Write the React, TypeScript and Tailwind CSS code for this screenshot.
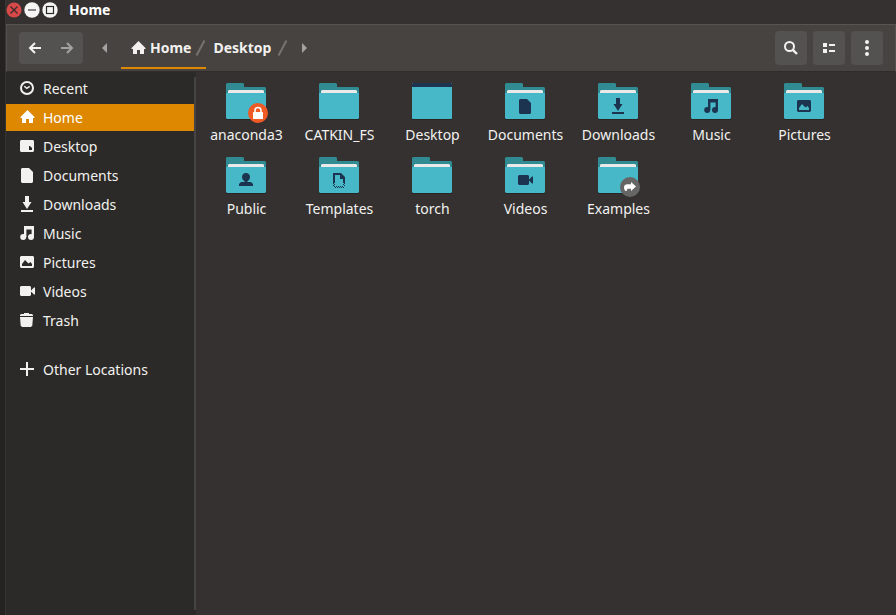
import React from "react";

type GlyphName =
  | "recent"
  | "home"
  | "desktop"
  | "documents"
  | "downloads"
  | "music"
  | "pictures"
  | "videos"
  | "trash"
  | "plus"
  | "public"
  | "templates";

const glyphs: Record<GlyphName, React.ReactNode> = {
  recent: (
    <g fill="none" stroke="currentColor">
      <circle cx="8" cy="8" r="6" strokeWidth="2" />
      <path d="M5.3 6.2 L7.8 8.4 L10.7 6.4" strokeWidth="1.4" />
    </g>
  ),
  home: <path d="M8.5 1 L15.5 8 V9 H14 V14 H10 V10 H7 V14 H3 V9 H1.5 V8 Z" />,
  desktop: <path fillRule="evenodd" d="M2 2 H14 L15 3 V13 L14 14 H2 L1 13 V3 Z M10 8 V12 H13 V10 L11 8 Z" />,
  documents: <path d="M3 1 H10 L14 5 V15 L13 16 H3 L2 15 V2 Z" />,
  downloads: (
    <g>
      <path d="M6 0 H10 V6 H12.5 L8 13 L3.5 6 H6 Z" />
      <path d="M2 14 H14 V16 H2 Z" />
    </g>
  ),
  music: (
    <g>
      <path d="M5 1 H15 V12 H12.6 V4.6 H7.4 V12 H5 Z" />
      <circle cx="4.2" cy="12" r="3" />
      <circle cx="12" cy="12" r="3" />
    </g>
  ),
  pictures: (
    <path
      fillRule="evenodd"
      d="M2 2 H14 L15 3 V13 L14 14 H2 L1 13 V3 Z M3 12 H13 V10 L11.5 8 L9.5 9.5 L6 6 L3 10 Z"
    />
  ),
  videos: (
    <g>
      <path d="M2 3 H11 L12 4 V12 L11 13 H2 L1 12 V4 Z" />
      <path d="M12 7.5 L15 4.5 H16 V11.5 H15 L12 8.5 Z" />
    </g>
  ),
  trash: (
    <g>
      <path d="M5 1 H10 V2 H13 L14 3 V4 H1 V3 L2 2 H5 Z" />
      <path d="M1 5 H14 L13.3 13.5 L12 15 H3 L1.7 13.5 Z" />
    </g>
  ),
  plus: <path d="M7 1 H9 V7 H15 V9 H9 V15 H7 V9 H1 V7 H7 Z" />,
  public: (
    <g>
      <path d="M8 1 C10.6 1 12 2.8 12 5 C12 7.2 10.4 9.5 8 9.5 C5.6 9.5 4 7.2 4 5 C4 2.8 5.4 1 8 1 Z" />
      <path d="M6.6 8 H9.4 V10 H13 L15 12 V14 H1 V12 L3 10 H6.6 Z" />
    </g>
  ),
  templates: (
    <g>
      <path fillRule="evenodd" d="M2 1 H10 L14 5 V11 H12 V7 H9 V3 H4 V11 H2 Z" />
      <path
        d="M2 11 H3 V12 H2 Z M3 12 H4 V13 H3 Z M2 13 H3 V14 H2 Z M3 14 H4 V15 H3 Z M5 14 H6 V15 H5 Z M7 14 H8 V15 H7 Z M9 14 H10 V15 H9 Z M11 14 H12 V15 H11 Z M4 15 H5 V16 H4 Z M6 15 H7 V16 H6 Z M8 15 H9 V16 H8 Z M10 15 H11 V16 H10 Z M12 15 H13 V16 H12 Z M13 11 H14 V12 H13 Z M12 12 H13 V13 H12 Z M13 13 H14 V14 H13 Z"
        shapeRendering="crispEdges"
      />
    </g>
  ),
};

type Place = { label: string; icon: GlyphName };

const places: Place[] = [
  { label: "Recent", icon: "recent" },
  { label: "Home", icon: "home" },
  { label: "Desktop", icon: "desktop" },
  { label: "Documents", icon: "documents" },
  { label: "Downloads", icon: "downloads" },
  { label: "Music", icon: "music" },
  { label: "Pictures", icon: "pictures" },
  { label: "Videos", icon: "videos" },
  { label: "Trash", icon: "trash" },
];

type Folder = { label: string; emblem?: GlyphName; badge?: "lock" | "link"; desktop?: boolean };

const folders: Folder[] = [
  { label: "anaconda3", badge: "lock" },
  { label: "CATKIN_FS" },
  { label: "Desktop", desktop: true },
  { label: "Documents", emblem: "documents" },
  { label: "Downloads", emblem: "downloads" },
  { label: "Music", emblem: "music" },
  { label: "Pictures", emblem: "pictures" },
  { label: "Public", emblem: "public" },
  { label: "Templates", emblem: "templates" },
  { label: "torch" },
  { label: "Videos", emblem: "videos" },
  { label: "Examples", badge: "link" },
];

function FolderIcon({ emblem, badge, desktop }: Folder) {
  return (
    <svg width="47" height="42" viewBox="0 0 47 42" aria-hidden="true">
      {desktop ? (
        <g>
          <rect x="3" y="1" width="40" height="36" rx="1" fill="#282524" />
          <rect x="3" y="0" width="40" height="36" rx="1" fill="#47b8c7" />
          <path d="M4 0 H42 L43 1 V4 H3 V1 Z" fill="#1c3450" />
        </g>
      ) : (
        <g>
          <rect x="3" y="5" width="40" height="32" rx="1" fill="#282524" />
          <path d="M4 0 H20 L21 1 V4 H42 L43 5 V20 H3 V1 Z" fill="#308b92" />
          <path d="M6 7 H40 L41 8 V12 H5 V8 Z" fill="#e9e9e9" />
          <path d="M3 10 H43 V35 L42 36 H4 L3 35 Z" fill="#47b8c7" />
        </g>
      )}
      {emblem && (
        <g transform="translate(15 15)" fill="currentColor" className="text-[#1c3450]">
          {glyphs[emblem]}
        </g>
      )}
      {badge === "lock" && (
        <g>
          <circle cx="35" cy="30" r="10" fill="#f05a24" />
          <rect x="30" y="29" width="10" height="7" rx="0.5" fill="#fff" />
          <path d="M32 29 V27.5 A3 3 0 0 1 38 27.5 V29" fill="none" stroke="#fff" strokeWidth="1.6" />
        </g>
      )}
      {badge === "link" && (
        <g>
          <circle cx="35" cy="30" r="10" fill="#666" />
          <path
            d="M36 25 L41 29.5 L36 34 V31.8 H32.5 L31.5 34 H30.5 C29.4 32.8 29 31.5 29 30.4 C29 28.2 30.4 27.2 32.5 27.2 H36 Z"
            fill="#fff"
          />
        </g>
      )}
    </svg>
  );
}

function PlaceLink({ label, icon, active }: Place & { active?: boolean }) {
  return (
    <a
      href={"#" + label.toLowerCase().replace(" ", "-")}
      aria-current={active ? "page" : undefined}
      className={
        "flex h-[27px] items-center gap-2 pl-[13px] " + (active ? "bg-[#dd8800] text-white" : "text-[#f2f1ef]")
      }
    >
      <svg width="16" height="17" viewBox="0 0 16 17" fill="currentColor" aria-hidden="true">
        {glyphs[icon]}
      </svg>
      {label}
    </a>
  );
}

function Slash() {
  return (
    <svg width="11" height="16" viewBox="0 0 11 16" aria-hidden="true">
      <path d="M1.5 15.5 L9.5 0.5" stroke="#77736f" strokeWidth="2" />
    </svg>
  );
}

function ToolButton({ label, children }: { label: string; children: React.ReactNode }) {
  return (
    <button
      type="button"
      aria-label={label}
      className="flex h-[34px] w-8 items-center justify-center rounded bg-[#545250] text-[#f2f2f0]"
    >
      <svg width="16" height="16" viewBox="0 0 16 16" fill="currentColor" aria-hidden="true">
        {children}
      </svg>
    </button>
  );
}

export default function App() {
  return (
    <div className="flex min-h-screen bg-[#343130] font-['Noto_Sans',sans-serif] text-sm leading-5 text-[#f2f1ef]">
      <div className="w-[6px] shrink-0 border-r border-[#373532] bg-[#252321]" />
      <div className="flex min-w-0 grow flex-col">
        <header className="flex h-6 items-center pb-1">
          <div className="flex gap-[2px]">
            <button type="button" aria-label="Close">
              <svg width="16" height="16" viewBox="0 0 16 16" className="block">
                <circle cx="8" cy="8" r="7.5" fill="#d84a4a" />
                <path d="M4.5 4.5 L11.5 11.5 M11.5 4.5 L4.5 11.5" stroke="#3c2a2a" strokeWidth="1.3" />
              </svg>
            </button>
            <button type="button" aria-label="Minimize">
              <svg width="16" height="16" viewBox="0 0 16 16" className="block">
                <circle cx="8" cy="8" r="7.7" fill="#f5f5f5" />
                <path d="M4 8 H12" stroke="#8a8786" strokeWidth="2" />
              </svg>
            </button>
            <button type="button" aria-label="Maximize">
              <svg width="16" height="16" viewBox="0 0 16 16" className="block">
                <circle cx="8" cy="8" r="7.7" fill="#f5f5f5" />
                <rect x="4.5" y="4.5" width="7" height="7" fill="none" stroke="#2b2827" strokeWidth="1.2" />
              </svg>
            </button>
          </div>
          <h1 className="ml-[11px] font-bold text-white">Home</h1>
        </header>

        <div className="flex h-12 items-center border-x border-t border-b border-x-[#53504d] border-t-[#575451] border-b-[#2f2c2b] bg-[#464340] pr-3 pl-3">
          <div className="flex h-8 rounded bg-[#545250]">
            <button type="button" aria-label="Back" className="flex w-8 items-center justify-center text-[#f2f2f0]">
              <svg width="16" height="16" viewBox="0 0 16 16" fill="none" stroke="currentColor" strokeWidth="2">
                <path d="M14 8 H3.5 M8 3 L3 8 L8 13" />
              </svg>
            </button>
            <button type="button" aria-label="Forward" className="flex w-8 items-center justify-center text-[#a5a3a1]">
              <svg width="16" height="16" viewBox="0 0 16 16" fill="none" stroke="currentColor" strokeWidth="2">
                <path d="M2 8 H12.5 M8 3 L13 8 L8 13" />
              </svg>
            </button>
          </div>
          <button type="button" aria-label="Scroll path left" className="ml-[18px] text-[#a5a3a1]">
            <svg width="6" height="10" viewBox="0 0 6 10" fill="currentColor" className="block">
              <path d="M6 0 V10 L1 5 Z" />
            </svg>
          </button>
          <nav aria-label="Path" className="ml-[14px] flex items-center font-bold">
            <a
              href="#home"
              className="flex h-[42px] items-center border-y-2 border-t-transparent border-b-[#dd8800] pl-[9px]"
            >
              <svg width="16" height="17" viewBox="0 0 16 17" fill="currentColor" className="mr-1" aria-hidden="true">
                {glyphs.home}
              </svg>
              <span className="mr-1">Home</span>
              <Slash />
            </a>
            <a href="#desktop" className="flex items-center pl-[7px]">
              <span className="mr-[6px]">Desktop</span>
              <Slash />
            </a>
          </nav>
          <button type="button" aria-label="Scroll path right" className="ml-[14px] text-[#a5a3a1]">
            <svg width="6" height="10" viewBox="0 0 6 10" fill="currentColor" className="block">
              <path d="M0 0 V10 L5 5 Z" />
            </svg>
          </button>
          <div className="ml-auto flex gap-[6px]">
            <ToolButton label="Search">
              <circle cx="6.5" cy="6.5" r="4.5" fill="none" stroke="currentColor" strokeWidth="2" />
              <path d="M9.8 9.8 L14 14" stroke="currentColor" strokeWidth="2.4" />
            </ToolButton>
            <ToolButton label="View as list">
              <path d="M2 3 H6 V7 H2 Z M2 9 H6 V13 H2 Z M8 4 H14 V6 H8 Z M8 10 H14 V12 H8 Z" />
            </ToolButton>
            <ToolButton label="Menu">
              <circle cx="8" cy="2" r="2" />
              <circle cx="8" cy="8" r="2" />
              <circle cx="8" cy="14" r="2" />
            </ToolButton>
          </div>
        </div>

        <div className="flex grow">
          <aside className="flex w-[190px] shrink-0 bg-[#2b2a28]">
            <nav aria-label="Places" className="flex grow flex-col gap-[2px] pt-[3px]">
              {places.map((place) => (
                <PlaceLink key={place.label} {...place} active={place.label === "Home"} />
              ))}
              <div className="pt-5">
                <PlaceLink label="Other Locations" icon="plus" />
              </div>
            </nav>
            <div className="my-[5px] w-[2px] bg-[#464443]" />
          </aside>
          <main className="grid grow grid-cols-[repeat(auto-fill,93px)] content-start gap-y-3 pt-[11px] pl-1">
            {folders.map((folder) => (
              <button key={folder.label} type="button" className="flex flex-col items-center">
                <FolderIcon {...folder} />
                <span>{folder.label}</span>
              </button>
            ))}
          </main>
        </div>
      </div>
    </div>
  );
}
